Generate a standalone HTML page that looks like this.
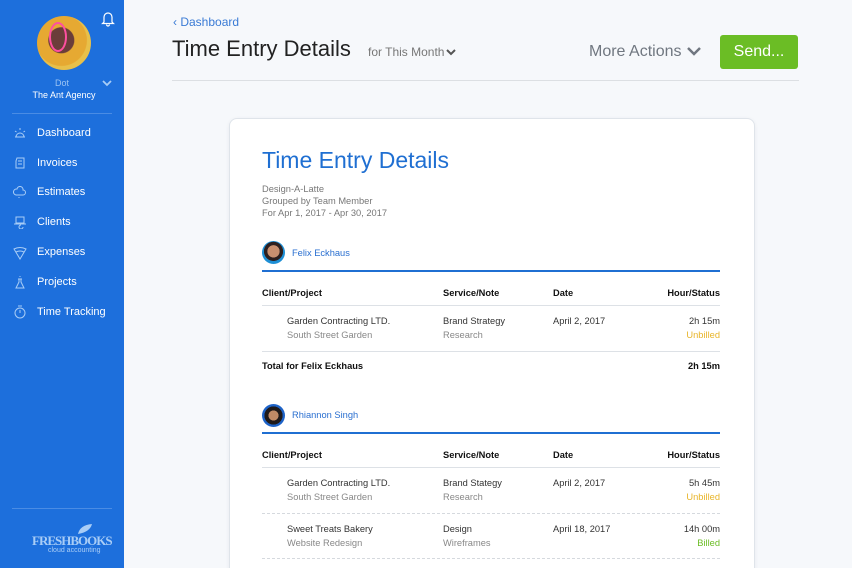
<!DOCTYPE html>
<html style="height:568px;overflow:hidden"><head><meta charset="utf-8"><style>
*{margin:0;padding:0;box-sizing:border-box}
body{width:852px;height:568px;overflow:hidden;background:#f6f8fb;font-family:"Liberation Sans",sans-serif;position:relative}
.sb{position:absolute;left:0;top:0;width:124px;height:568px;background:#1d6fdc;color:#fff}
.abs{position:absolute}
.nav{position:absolute;left:37px;font-size:11px;color:#fff}
.ic{position:absolute;left:13px;width:14px;height:14px}
.card{position:absolute;left:229px;top:118px;width:526px;height:460px;background:#fff;border:1px solid #dfe4ea;border-radius:8px;box-shadow:0 1px 4px rgba(0,0,0,.06)}
.t{position:absolute;font-size:9.3px;color:#333}
.h{font-weight:bold;color:#111}
.g{color:#888}
.line{position:absolute;left:262px;width:458px;height:1px;background:#dde1e6}
</style></head><body>
<div class="sb">
  <svg class="abs" style="left:101px;top:11px" width="14" height="16" viewBox="0 0 14 16"><path d="M3 11V6a4 4 0 0 1 8 0v5l1.5 1.5h-11z M5.5 13.5a1.5 1.5 0 0 0 3 0" fill="none" stroke="#fff" stroke-width="1.2"/></svg>
  <div class="abs" style="left:37px;top:16px;width:54px;height:54px;border-radius:50%;background:radial-gradient(circle at 45% 45%,#6b3d3a 0 30%,#e6a932 32% 60%,#e8c04a 62%);"><div class="abs" style="left:12px;top:6px;width:18px;height:30px;border:2px solid #ff4fa0;border-radius:50%"></div></div>
  <div class="abs" style="left:0;width:124px;top:78px;text-align:center;font-size:9px;color:#9cc4f3">Dot</div>
  <div class="abs" style="left:0;width:128px;top:90px;text-align:center;font-size:9px;color:#fff">The Ant Agency</div>
  <svg class="abs" style="left:102px;top:80px" width="10" height="7"><path d="M1 1l4 4 4-4" fill="none" stroke="#a9cdf6" stroke-width="1.8"/></svg>
  <div class="abs" style="left:12px;top:113px;width:100px;height:1px;background:#4a8ce4"></div>
  <svg class="ic" style="top:126px" viewBox="0 0 14 14"><path d="M2 11h10M3 11a4 4 0 0 1 8 0M7 2v2M2 5l1.5 1M12 5l-1.5 1" fill="none" stroke="#a9cdf6" stroke-width="1"/></svg><div class="nav" style="top:127px">Dashboard</div>
  <svg class="ic" style="top:156px" viewBox="0 0 14 14"><path d="M4 2h7v10H3V5zM5 5h4M5 8h4" fill="none" stroke="#a9cdf6" stroke-width="1"/></svg><div class="nav" style="top:157px">Invoices</div>
  <svg class="ic" style="top:186px" viewBox="0 0 14 14"><path d="M3 9a3 3 0 0 1 1-6 3 3 0 0 1 6 1 2.5 2.5 0 0 1 0 5zM6 11v1" fill="none" stroke="#a9cdf6" stroke-width="1"/></svg><div class="nav" style="top:186px">Estimates</div>
  <svg class="ic" style="top:215px" viewBox="0 0 14 14"><path d="M3 2h8v6H3zM1 9h12M8 10a2 2 0 1 0 2 2" fill="none" stroke="#a9cdf6" stroke-width="1"/></svg><div class="nav" style="top:216px">Clients</div>
  <svg class="ic" style="top:246px" viewBox="0 0 14 14"><path d="M1 3q6-3 12 0L7 13z M3 6q4-2 8 0" fill="none" stroke="#a9cdf6" stroke-width="1"/></svg><div class="nav" style="top:246px">Expenses</div>
  <svg class="ic" style="top:275px" viewBox="0 0 14 14"><path d="M5 4h4M6 4v3l-3 6h8l-3-6V4M7 1v1" fill="none" stroke="#a9cdf6" stroke-width="1"/></svg><div class="nav" style="top:276px">Projects</div>
  <svg class="ic" style="top:305px" viewBox="0 0 14 14"><circle cx="7" cy="8" r="5" fill="none" stroke="#a9cdf6"/><path d="M7 8V5M5 1h4" stroke="#a9cdf6" fill="none"/></svg><div class="nav" style="top:306px">Time Tracking</div>
  <div class="abs" style="left:12px;top:508px;width:100px;height:1px;background:#4a8ce4"></div>
  <div class="abs" style="left:32px;top:533px;font-size:13px;font-weight:bold;color:#a9cdf6;letter-spacing:-1px;font-family:'Liberation Serif',serif">FRESHBOOKS</div>
  <div class="abs" style="left:48px;top:547px;font-size:7px;color:#a9cdf6">cloud accounting</div>
  <svg class="abs" style="left:77px;top:523px" width="16" height="12"><path d="M1 11Q3 2 15 1 13 9 1 11z" fill="#a9cdf6"/></svg>
</div>
<div class="abs" style="left:173px;top:15px;font-size:12px;color:#3a7bd5">‹ Dashboard</div>
<div class="abs" style="left:172px;top:36px;font-size:22px;color:#222">Time Entry Details</div>
<div class="abs" style="left:368px;top:45px;font-size:12px;color:#777">for This Month</div>
<svg class="abs" style="left:446px;top:49px" width="10" height="7"><path d="M1 1l4 4 4-4" fill="none" stroke="#555" stroke-width="2"/></svg>
<div class="abs" style="left:589px;top:43px;font-size:16px;color:#707780">More Actions</div>
<svg class="abs" style="left:687px;top:47px" width="14" height="10"><path d="M1 1l6 6 6-6" fill="none" stroke="#707780" stroke-width="2.5"/></svg>
<div class="abs" style="left:720px;top:35px;width:78px;height:34px;background:#6bbd25;border-radius:3px;color:#fff;font-size:16px;text-align:center;line-height:34px">Send...</div>
<div class="abs" style="left:172px;top:80px;width:627px;height:1px;background:#dcdfe3"></div>
<div class="card"></div>
<div class="abs" style="left:262px;top:147px;font-size:23px;color:#1f6fd2">Time Entry Details</div>
<div class="t g" style="left:262px;top:184px;color:#777">Design-A-Latte</div>
<div class="t g" style="left:262px;top:196px;color:#777">Grouped by Team Member</div>
<div class="t g" style="left:262px;top:208px;color:#777">For Apr 1, 2017 - Apr 30, 2017</div>

<div class="abs" style="left:262px;top:241px;width:23px;height:23px;border-radius:50%;background:radial-gradient(circle at 50% 45%,#c99070 0 35%,#2d2020 37% 55%,#1e8fd5 57%)"></div>
<div class="t" style="left:292px;top:248px;color:#2a6fd0">Felix Eckhaus</div>
<div class="abs" style="left:262px;top:270px;width:458px;height:2px;background:#1f6fd2"></div>
<div class="t h" style="left:262px;top:288px">Client/Project</div>
<div class="t h" style="left:443px;top:288px">Service/Note</div>
<div class="t h" style="left:553px;top:288px">Date</div>
<div class="t h" style="left:620px;width:100px;top:288px;text-align:right">Hour/Status</div>
<div class="line" style="top:305px"></div>
<div class="t" style="left:287px;top:316px">Garden Contracting LTD.</div>
<div class="t g" style="left:287px;top:330px">South Street Garden</div>
<div class="t" style="left:443px;top:316px">Brand Strategy</div>
<div class="t g" style="left:443px;top:330px">Research</div>
<div class="t" style="left:553px;top:316px">April 2, 2017</div>
<div class="t" style="left:620px;width:100px;top:316px;text-align:right">2h 15m</div>
<div class="t" style="left:620px;width:100px;top:330px;text-align:right;color:#e8b52a">Unbilled</div>
<div class="line" style="top:351px"></div>
<div class="t h" style="left:262px;top:361px">Total for Felix Eckhaus</div>
<div class="t h" style="left:620px;width:100px;top:361px;text-align:right">2h 15m</div>

<div class="abs" style="left:262px;top:404px;width:23px;height:23px;border-radius:50%;background:radial-gradient(circle at 50% 50%,#c08a66 0 30%,#1f1a1a 32% 55%,#1e63c8 57%)"></div>
<div class="t" style="left:292px;top:410px;color:#2a6fd0">Rhiannon Singh</div>
<div class="abs" style="left:262px;top:432px;width:458px;height:2px;background:#1f6fd2"></div>
<div class="t h" style="left:262px;top:450px">Client/Project</div>
<div class="t h" style="left:443px;top:450px">Service/Note</div>
<div class="t h" style="left:553px;top:450px">Date</div>
<div class="t h" style="left:620px;width:100px;top:450px;text-align:right">Hour/Status</div>
<div class="line" style="top:467px"></div>
<div class="t" style="left:287px;top:478px">Garden Contracting LTD.</div>
<div class="t g" style="left:287px;top:492px">South Street Garden</div>
<div class="t" style="left:443px;top:478px">Brand Stategy</div>
<div class="t g" style="left:443px;top:492px">Research</div>
<div class="t" style="left:553px;top:478px">April 2, 2017</div>
<div class="t" style="left:620px;width:100px;top:478px;text-align:right">5h 45m</div>
<div class="t" style="left:620px;width:100px;top:492px;text-align:right;color:#e8b52a">Unbilled</div>
<div class="abs" style="left:262px;top:513px;width:458px;border-top:1px dashed #d5d9de"></div>
<div class="t" style="left:287px;top:524px">Sweet Treats Bakery</div>
<div class="t g" style="left:287px;top:538px">Website Redesign</div>
<div class="t" style="left:443px;top:524px">Design</div>
<div class="t g" style="left:443px;top:538px">Wireframes</div>
<div class="t" style="left:553px;top:524px">April 18, 2017</div>
<div class="t" style="left:620px;width:100px;top:524px;text-align:right">14h 00m</div>
<div class="t" style="left:620px;width:100px;top:538px;text-align:right;color:#6bbd25">Billed</div>
<div class="abs" style="left:262px;top:558px;width:458px;border-top:1px dashed #d5d9de"></div>
</body></html>
